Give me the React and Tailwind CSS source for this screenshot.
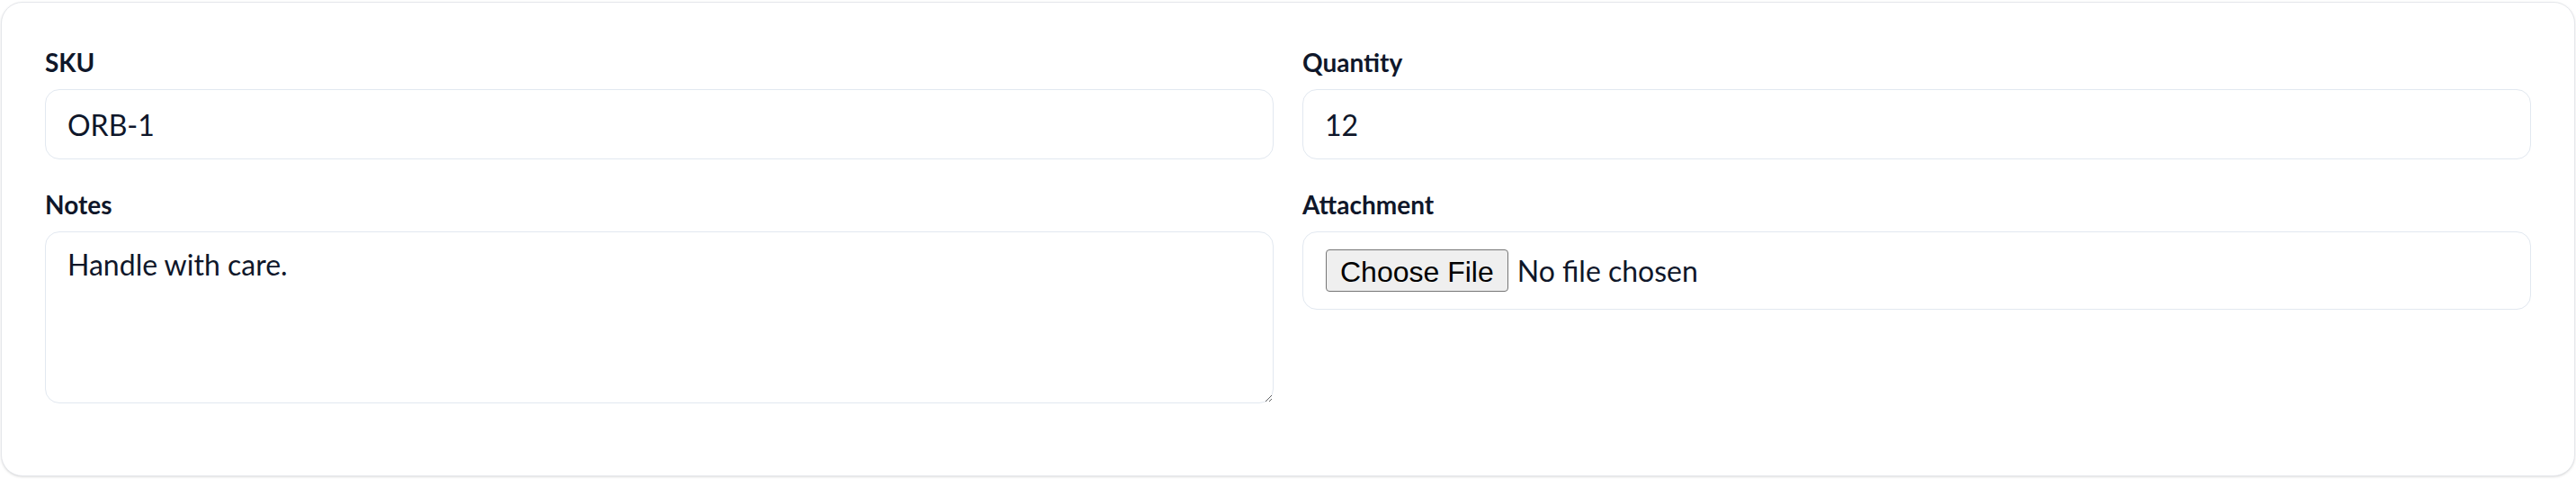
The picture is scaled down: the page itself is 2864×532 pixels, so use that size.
import React from "react";

function Field({ label, children }) {
  return (
    <div className="flex flex-col">
      <label className="text-[28px] leading-[40px] font-bold text-[#0f172a] mb-[10px]">
        {label}
      </label>
      {children}
    </div>
  );
}

function App() {
  return (
    <div className="min-h-screen bg-white pt-[2px] px-[1px] font-['Lato',sans-serif]">
      <div className="rounded-[24px] border border-[#e5e7eb] bg-white shadow-sm px-[48px] pt-[46px] pb-[80px]">
        <div className="grid grid-cols-2 gap-x-[32px] gap-y-[30px]">
          <Field label="SKU">
            <input
              type="text"
              defaultValue="ORB-1"
              className="h-[78px] w-full rounded-[16px] border border-[#e2e8f0] px-[24px] text-[32px] text-[#0f172a] outline-none"
            />
          </Field>
          <Field label="Quantity">
            <input
              type="number"
              defaultValue="12"
              className="h-[78px] w-full rounded-[16px] border border-[#e2e8f0] px-[24px] text-[32px] text-[#0f172a] outline-none"
            />
          </Field>
          <Field label="Notes">
            <textarea
              defaultValue="Handle with care."
              className="h-[191px] w-full rounded-[16px] border border-[#e2e8f0] px-[24px] pt-[12px] text-[32px] leading-[48px] text-[#0f172a] outline-none"
            />
          </Field>
          <Field label="Attachment">
            <input
              type="file"
              className="h-[87px] w-full rounded-[16px] border border-[#e2e8f0] px-[25px] py-[19px] text-[32px] leading-[48px] text-[#0f172a] outline-none file:h-[47px] file:rounded-[4px] file:border file:border-[#767676] file:bg-[#efefef] file:px-[15px] file:mr-[10px] file:font-['Liberation_Sans',sans-serif] file:text-[32px] file:text-black"
            />
          </Field>
        </div>
      </div>
    </div>
  );
}

export default App;
